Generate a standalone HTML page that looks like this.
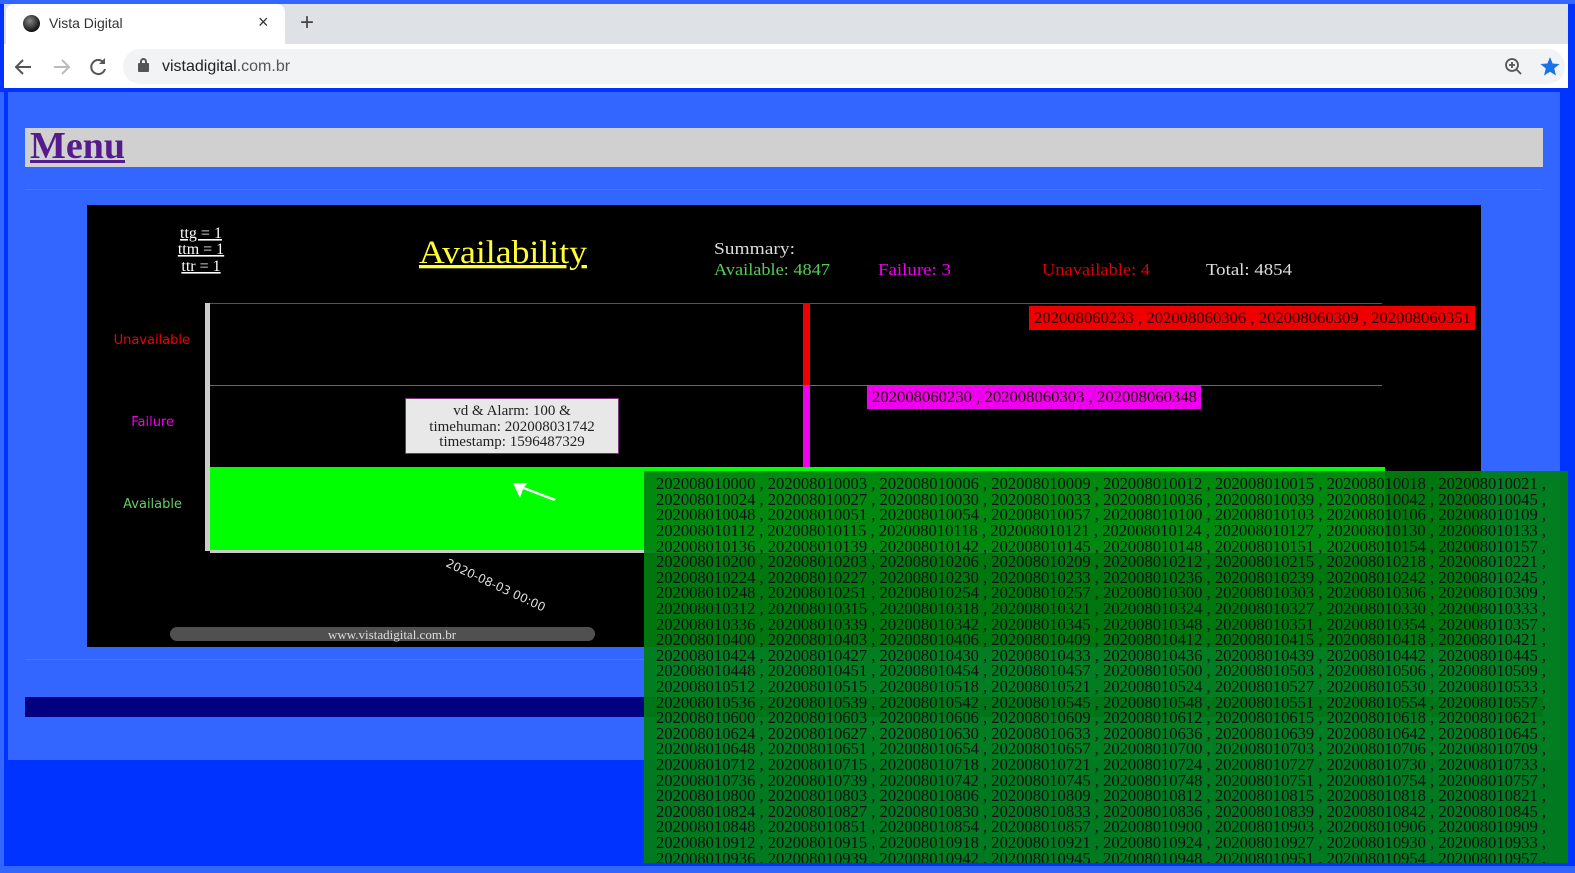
<!DOCTYPE html>
<html><head><meta charset="utf-8"><style>
*{margin:0;padding:0;box-sizing:border-box}
body{width:1575px;height:873px;overflow:hidden;background:#0033ff;position:relative;font-family:"Liberation Sans",sans-serif}
.a{position:absolute}
</style></head><body>
<div class="a" style="left:0;top:0;width:1575px;height:4px;background:#3366ff"></div>
<div class="a" style="left:4px;top:4px;width:1564px;height:40px;background:#dee1e6"></div>
<div class="a" style="left:6px;top:4px;width:279px;height:40px;background:#fff;border-radius:8px 8px 0 0"></div>
<div class="a" style="left:23px;top:15px;width:17px;height:17px;border-radius:50%;background:radial-gradient(circle at 40% 35%,#888,#111 70%)"></div>
<div class="a" style="left:49px;top:15px;font-size:14px;color:#333">Vista Digital</div>
<div class="a" style="left:258px;top:12px;font-size:18px;color:#333">×</div>
<div class="a" style="left:300px;top:9px;font-size:24px;color:#444">+</div>
<div class="a" style="left:4px;top:44px;width:1564px;height:44px;background:#fff"></div>
<svg class="a" style="left:12px;top:55px" width="100" height="24" viewBox="0 0 100 24">
<path d="M19 12H5M11 5l-7 7 7 7" stroke="#555" stroke-width="2" fill="none"/>
<path d="M42 12h14M50 5l7 7-7 7" stroke="#bbb" stroke-width="2" fill="none"/>
<path d="M92 8a7 7 0 1 0 1 6" stroke="#555" stroke-width="2" fill="none"/><path d="M93 3v6h-6z" fill="#555"/>
</svg>
<div class="a" style="left:123px;top:49px;width:1442px;height:35px;background:#f1f3f4;border-radius:18px"></div>
<div class="a" style="left:138px;top:63px;width:11px;height:9px;background:#555;border-radius:1px"></div>
<div class="a" style="left:140px;top:58px;width:7px;height:8px;border:2px solid #555;border-radius:4px 4px 0 0"></div>
<div class="a" style="left:162px;top:58px;font-size:16px;color:#222">vistadigital<span style="color:#555">.com.br</span></div>
<svg class="a" style="left:1502px;top:56px" width="60" height="22" viewBox="0 0 60 22">
<circle cx="10" cy="9" r="6" stroke="#555" stroke-width="1.8" fill="none"/><path d="M14 13l5 5M7 9h6M10 6v6" stroke="#555" stroke-width="1.8"/>
<path d="M48 1l2.6 6.5 7 .5-5.4 4.5 1.8 7-6-3.8-6 3.8 1.8-7-5.4-4.5 7-.5z" fill="#1a73e8"/>
</svg>
<div class="a" style="left:0;top:88px;width:1575px;height:785px;background:#0033ff"></div>
<div class="a" style="left:0;top:92px;width:4px;height:781px;background:#3366ff"></div>
<div class="a" style="left:8px;top:92px;width:1552px;height:668px;background:#3366ff"></div>
<div class="a" style="left:0;top:866px;width:1575px;height:7px;background:#3366ff"></div>
<div class="a" style="left:25px;top:128px;width:1518px;height:39px;background:#d0d0d0"></div>
<div class="a" style="left:30px;top:124px;font-family:'Liberation Serif',serif;font-weight:bold;font-size:38px;color:#551a8b;text-decoration:underline">Menu</div>
<div class="a" style="left:25px;top:189px;width:1518px;height:1px;background:#777"></div>
<div class="a" style="left:25px;top:659px;width:1518px;height:1px;background:#777"></div>
<div class="a" style="left:25px;top:697px;width:1518px;height:20px;background:#000080"></div>
<svg class="a" style="left:87px;top:205px" width="1394" height="442" viewBox="87 205 1394 442" font-family="Liberation Serif,serif">
<rect x="87" y="205" width="1394" height="442" fill="#000"/>
<g fill="#fff" font-size="16" text-anchor="middle" text-decoration="underline"><text x="201" y="238">ttg = 1</text><text x="201" y="254">ttm = 1</text><text x="201" y="271">ttr = 1</text></g>
<text x="419" y="263" font-size="33" fill="#ffff33" text-decoration="underline" textLength="168" lengthAdjust="spacingAndGlyphs">Availability</text>
<text x="714" y="254" font-size="17" fill="#ddd" textLength="81" lengthAdjust="spacingAndGlyphs">Summary:</text>
<text x="714" y="275" font-size="17" fill="#5c5" textLength="116" lengthAdjust="spacingAndGlyphs">Available: 4847</text>
<text x="878" y="275" font-size="17" fill="#e0e" textLength="73" lengthAdjust="spacingAndGlyphs">Failure: 3</text>
<text x="1042" y="275" font-size="17" fill="#d00" textLength="108" lengthAdjust="spacingAndGlyphs">Unavailable: 4</text>
<text x="1206" y="275" font-size="17" fill="#ddd" textLength="86" lengthAdjust="spacingAndGlyphs">Total: 4854</text>
<line x1="207" y1="303.5" x2="1382" y2="303.5" stroke="#555"/>
<line x1="207" y1="385.5" x2="1382" y2="385.5" stroke="#666"/>
<rect x="205" y="303" width="5" height="248" fill="#ccc"/>
<rect x="210" y="550" width="1175" height="3" fill="#ccc"/>
<rect x="210" y="467" width="1175" height="83" fill="#00ff00"/>
<rect x="803" y="303" width="7" height="82" fill="#e00"/>
<rect x="803" y="386" width="7" height="81" fill="#e0e"/>
<g font-family="DejaVu Sans,sans-serif" font-size="13"><text x="190" y="344" fill="#e00" text-anchor="end">Unavailable</text><text x="174" y="426" fill="#e0e" text-anchor="end">Failure</text><text x="182" y="508" fill="#6c6" text-anchor="end">Available</text></g>
<rect x="1029" y="306" width="446" height="24" fill="#e00"/>
<text x="1034" y="323" font-size="16" fill="#200" textLength="437" lengthAdjust="spacingAndGlyphs">202008060233 , 202008060306 , 202008060309 , 202008060351</text>
<rect x="867" y="386" width="334" height="23" fill="#e0e"/>
<text x="872" y="402" font-size="16" fill="#200" textLength="325" lengthAdjust="spacingAndGlyphs">202008060230 , 202008060303 , 202008060348</text>
<rect x="405.5" y="398.5" width="213" height="55" fill="#e8e8e8" stroke="#737"/>
<g font-size="15" fill="#222" text-anchor="middle"><text x="512" y="415">vd &amp; Alarm: 100 &amp;</text><text x="512" y="431">timehuman: 202008031742</text><text x="512" y="446">timestamp: 1596487329</text></g>
<path d="M513 483l15 0-4 4 32 12-2 2-31-12 -3 9z" fill="#fff"/>
<text x="445" y="566" font-family="DejaVu Sans,sans-serif" font-size="12" fill="#ddd" transform="rotate(25 445 566)">2020-08-03 00:00</text>
<rect x="170" y="627" width="425" height="14" rx="7" fill="#505050"/>
<text x="392" y="639" font-size="13" fill="#ddd" text-anchor="middle">www.vistadigital.com.br</text>
</svg>
<svg class="a" style="left:644px;top:471px" width="924" height="392" viewBox="644 471 924 392" font-family="Liberation Serif,serif" font-size="17" fill="#111" lengthAdjust="spacingAndGlyphs">
<rect x="644" y="471" width="924" height="392" fill="#007f10" fill-opacity="0.93"/>
<g>
<text x="656" y="489" textLength="890" lengthAdjust="spacingAndGlyphs">202008010000 , 202008010003 , 202008010006 , 202008010009 , 202008010012 , 202008010015 , 202008010018 , 202008010021 ,</text>
<text x="656" y="505" textLength="890" lengthAdjust="spacingAndGlyphs">202008010024 , 202008010027 , 202008010030 , 202008010033 , 202008010036 , 202008010039 , 202008010042 , 202008010045 ,</text>
<text x="656" y="520" textLength="890" lengthAdjust="spacingAndGlyphs">202008010048 , 202008010051 , 202008010054 , 202008010057 , 202008010100 , 202008010103 , 202008010106 , 202008010109 ,</text>
<text x="656" y="536" textLength="890" lengthAdjust="spacingAndGlyphs">202008010112 , 202008010115 , 202008010118 , 202008010121 , 202008010124 , 202008010127 , 202008010130 , 202008010133 ,</text>
<text x="656" y="552" textLength="890" lengthAdjust="spacingAndGlyphs">202008010136 , 202008010139 , 202008010142 , 202008010145 , 202008010148 , 202008010151 , 202008010154 , 202008010157 ,</text>
<text x="656" y="567" textLength="890" lengthAdjust="spacingAndGlyphs">202008010200 , 202008010203 , 202008010206 , 202008010209 , 202008010212 , 202008010215 , 202008010218 , 202008010221 ,</text>
<text x="656" y="583" textLength="890" lengthAdjust="spacingAndGlyphs">202008010224 , 202008010227 , 202008010230 , 202008010233 , 202008010236 , 202008010239 , 202008010242 , 202008010245 ,</text>
<text x="656" y="598" textLength="890" lengthAdjust="spacingAndGlyphs">202008010248 , 202008010251 , 202008010254 , 202008010257 , 202008010300 , 202008010303 , 202008010306 , 202008010309 ,</text>
<text x="656" y="614" textLength="890" lengthAdjust="spacingAndGlyphs">202008010312 , 202008010315 , 202008010318 , 202008010321 , 202008010324 , 202008010327 , 202008010330 , 202008010333 ,</text>
<text x="656" y="630" textLength="890" lengthAdjust="spacingAndGlyphs">202008010336 , 202008010339 , 202008010342 , 202008010345 , 202008010348 , 202008010351 , 202008010354 , 202008010357 ,</text>
<text x="656" y="645" textLength="890" lengthAdjust="spacingAndGlyphs">202008010400 , 202008010403 , 202008010406 , 202008010409 , 202008010412 , 202008010415 , 202008010418 , 202008010421 ,</text>
<text x="656" y="661" textLength="890" lengthAdjust="spacingAndGlyphs">202008010424 , 202008010427 , 202008010430 , 202008010433 , 202008010436 , 202008010439 , 202008010442 , 202008010445 ,</text>
<text x="656" y="676" textLength="890" lengthAdjust="spacingAndGlyphs">202008010448 , 202008010451 , 202008010454 , 202008010457 , 202008010500 , 202008010503 , 202008010506 , 202008010509 ,</text>
<text x="656" y="692" textLength="890" lengthAdjust="spacingAndGlyphs">202008010512 , 202008010515 , 202008010518 , 202008010521 , 202008010524 , 202008010527 , 202008010530 , 202008010533 ,</text>
<text x="656" y="708" textLength="890" lengthAdjust="spacingAndGlyphs">202008010536 , 202008010539 , 202008010542 , 202008010545 , 202008010548 , 202008010551 , 202008010554 , 202008010557 ,</text>
<text x="656" y="723" textLength="890" lengthAdjust="spacingAndGlyphs">202008010600 , 202008010603 , 202008010606 , 202008010609 , 202008010612 , 202008010615 , 202008010618 , 202008010621 ,</text>
<text x="656" y="739" textLength="890" lengthAdjust="spacingAndGlyphs">202008010624 , 202008010627 , 202008010630 , 202008010633 , 202008010636 , 202008010639 , 202008010642 , 202008010645 ,</text>
<text x="656" y="754" textLength="890" lengthAdjust="spacingAndGlyphs">202008010648 , 202008010651 , 202008010654 , 202008010657 , 202008010700 , 202008010703 , 202008010706 , 202008010709 ,</text>
<text x="656" y="770" textLength="890" lengthAdjust="spacingAndGlyphs">202008010712 , 202008010715 , 202008010718 , 202008010721 , 202008010724 , 202008010727 , 202008010730 , 202008010733 ,</text>
<text x="656" y="786" textLength="890" lengthAdjust="spacingAndGlyphs">202008010736 , 202008010739 , 202008010742 , 202008010745 , 202008010748 , 202008010751 , 202008010754 , 202008010757 ,</text>
<text x="656" y="801" textLength="890" lengthAdjust="spacingAndGlyphs">202008010800 , 202008010803 , 202008010806 , 202008010809 , 202008010812 , 202008010815 , 202008010818 , 202008010821 ,</text>
<text x="656" y="817" textLength="890" lengthAdjust="spacingAndGlyphs">202008010824 , 202008010827 , 202008010830 , 202008010833 , 202008010836 , 202008010839 , 202008010842 , 202008010845 ,</text>
<text x="656" y="832" textLength="890" lengthAdjust="spacingAndGlyphs">202008010848 , 202008010851 , 202008010854 , 202008010857 , 202008010900 , 202008010903 , 202008010906 , 202008010909 ,</text>
<text x="656" y="848" textLength="890" lengthAdjust="spacingAndGlyphs">202008010912 , 202008010915 , 202008010918 , 202008010921 , 202008010924 , 202008010927 , 202008010930 , 202008010933 ,</text>
<text x="656" y="864" textLength="890" lengthAdjust="spacingAndGlyphs">202008010936 , 202008010939 , 202008010942 , 202008010945 , 202008010948 , 202008010951 , 202008010954 , 202008010957 ,</text>
</g>
</svg>
</body></html>
